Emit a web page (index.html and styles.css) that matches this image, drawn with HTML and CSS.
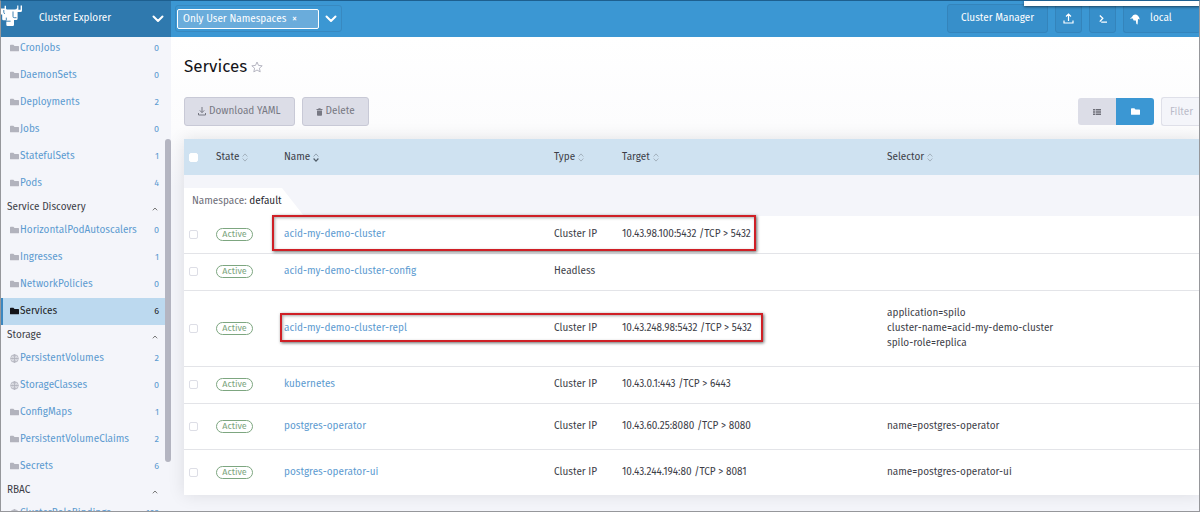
FILE: index.html
```html
<!DOCTYPE html>
<html lang="en">
<head>
<meta charset="utf-8">
<title>Services</title>
<link rel="stylesheet" href="styles.css">
</head>
<body>
<svg class="defs" aria-hidden="true">
  <symbol id="folder" viewBox="0 0 8 7"><path d="M0 .8Q0 .2.6.2H3L4 1.2H7.4Q8 1.2 8 1.8V5.4Q8 6 7.4 6H.6Q0 6 0 5.4Z" fill="currentColor"/></symbol>
  <symbol id="globe" viewBox="0 0 9 9"><g fill="none" stroke="currentColor" stroke-width=".9"><circle cx="4.5" cy="4.5" r="3.8"/><ellipse cx="4.5" cy="4.5" rx="1.7" ry="3.8"/><path d="M.7 4.5H8.3M4.5.7V8.3"/></g></symbol>
  <symbol id="chev" viewBox="0 0 12 8"><path d="M1.5 1.5 6 6 10.5 1.5" fill="none" stroke="currentColor" stroke-width="2" stroke-linecap="round" stroke-linejoin="round"/></symbol>
  <symbol id="up" viewBox="0 0 6 4"><path d="M.8 3.3 3 1 5.2 3.3" fill="none" stroke="currentColor"/></symbol>
  <symbol id="sort" viewBox="0 0 6 9"><g fill="none" stroke="currentColor" stroke-width=".9"><path d="M.6 3.5 3 .9 5.4 3.5"/><path d="M.6 5.5 3 8.1 5.4 5.5"/></g></symbol>
  <symbol id="sorted" viewBox="0 0 6 9"><g fill="none" stroke="currentColor" stroke-width=".9"><path d="M.6 3.5 3 .9 5.4 3.5" opacity=".5"/><path d="M.6 5.5 3 8.1 5.4 5.5" stroke-width="1.2"/></g></symbol>
</svg>
<header class="topbar">
  <div class="brand">
    <svg class="logo" viewBox="0 0 23 22"><path d="M0 3.5H4.6V.8H6V3.5Q6 4.6 7.2 4.6H14.5Q16.5 4.6 17.2 3V.5H18.4V4.8H20.6V.5H22V5.5Q22 7 20.5 7H17.6V13.5Q17.6 15 16.2 15H14V19.8Q14 21 12.8 21H7.6Q6.3 21 6.3 19.8V15.2H3.5Q2.2 15.2 2.2 14V9.6H0Z" fill="#fff"/><path d="M6.3 15.4V12.6M3.8 5V7.4Q3.8 8.6 5 8.6M6 16.2H10.6M13 6.5V11.5Q13 12.7 14.2 12.7H16.5" fill="none" stroke="#2f79ae" stroke-width=".9"/></svg>
    <button class="product">Cluster Explorer<svg class="chev"><use href="#chev"/></svg></button>
  </div>
  <div class="namespaces">
    <button class="chip">Only User Namespaces <span class="times">×</span></button>
    <button class="open" aria-label="Choose namespaces"><svg class="chev"><use href="#chev"/></svg></button>
  </div>
  <div class="actions">
    <button class="tool manager">Cluster Manager</button>
    <button class="tool" aria-label="Import"><svg width="11" height="11" viewBox="0 0 11 11"><path d="M5.5 8V1.2M3 3.5 5.5 1 8 3.5M1 7.5V10H10V7.5" fill="none" stroke="#fff" stroke-width="1.2"/></svg></button>
    <button class="tool" aria-label="Shell"><svg width="10" height="10" viewBox="0 0 10 10"><path d="M1.8 1.5 4.8 4.2 1.8 7.6M3.2 8.2H9" fill="none" stroke="#fff" stroke-width="1.3"/></svg></button>
    <button class="tool cluster"><svg width="10" height="12" viewBox="0 0 10 12"><path d="M.2 6Q.2 4.6 1.8 4.2Q2.8 1.6 5 1.4Q8.6 1.4 9.8 6.4L8 6 7.6 11.4 6.4 11 5.8 7.4 3.6 7.6 2.8 5.6 1.2 5.6Z" fill="#fff"/></svg>local</button>
  </div>
</header>
<div class="popup"></div>
<div class="body">
  <nav class="side">
    <ul>
      <li><a href="#"><svg><use href="#folder"/></svg>CronJobs<span>0</span></a></li>
      <li><a href="#"><svg><use href="#folder"/></svg>DaemonSets<span>0</span></a></li>
      <li><a href="#"><svg><use href="#folder"/></svg>Deployments<span>2</span></a></li>
      <li><a href="#"><svg><use href="#folder"/></svg>Jobs<span>0</span></a></li>
      <li><a href="#"><svg><use href="#folder"/></svg>StatefulSets<span>1</span></a></li>
      <li><a href="#"><svg><use href="#folder"/></svg>Pods<span>4</span></a></li>
    </ul>
    <h2>Service Discovery<svg><use href="#up"/></svg></h2>
    <ul>
      <li><a href="#"><svg><use href="#folder"/></svg>HorizontalPodAutoscalers<span>0</span></a></li>
      <li><a href="#"><svg><use href="#folder"/></svg>Ingresses<span>1</span></a></li>
      <li><a href="#"><svg><use href="#folder"/></svg>NetworkPolicies<span>0</span></a></li>
      <li><a href="#" class="current"><svg><use href="#folder"/></svg>Services<span>6</span></a></li>
    </ul>
    <h2>Storage<svg><use href="#up"/></svg></h2>
    <ul>
      <li><a href="#"><svg><use href="#globe"/></svg>PersistentVolumes<span>2</span></a></li>
      <li><a href="#"><svg><use href="#globe"/></svg>StorageClasses<span>0</span></a></li>
      <li><a href="#"><svg><use href="#folder"/></svg>ConfigMaps<span>1</span></a></li>
      <li><a href="#"><svg><use href="#folder"/></svg>PersistentVolumeClaims<span>2</span></a></li>
      <li><a href="#"><svg><use href="#folder"/></svg>Secrets<span>6</span></a></li>
    </ul>
    <h2>RBAC<svg><use href="#up"/></svg></h2>
    <ul>
      <li><a href="#"><svg><use href="#globe"/></svg>ClusterRoleBindings<span>102</span></a></li>
    </ul>
    <div class="thumb"></div>
  </nav>
  <main>
    <h1>Services <svg width="12" height="12" viewBox="0 0 12 12"><path d="M6 1 7.5 4.4 11.2 4.8 8.4 7.2 9.2 10.9 6 9 2.8 10.9 3.6 7.2.8 4.8 4.5 4.4Z" fill="none" stroke="#b6b6c2"/></svg></h1>
    <div class="bar">
      <button class="act" disabled><svg width="8" height="9" viewBox="0 0 8 9"><path d="M4 0V5.5M1.8 3.4 4 5.6 6.2 3.4M.5 6V8H7.5V6" fill="none" stroke="currentColor"/></svg>Download YAML</button>
      <button class="act" disabled><svg width="7" height="8" viewBox="0 0 7 8"><path d="M.5 1H2.2L2.6.3H4.4L4.8 1H6.5V2H.5ZM1 2.4H6V7Q6 7.8 5.2 7.8H1.8Q1 7.8 1 7Z" fill="currentColor"/></svg>Delete</button>
      <div class="views">
        <button aria-label="Flat list"><svg width="8" height="6" viewBox="0 0 8 6"><path d="M0 0H2V1.6H0ZM2.6 0H8V1.6H2.6ZM0 2.2H2V3.8H0ZM2.6 2.2H8V3.8H2.6ZM0 4.4H2V6H0ZM2.6 4.4H8V6H2.6Z" fill="#6d6e78"/></svg></button>
        <button class="on" aria-label="Group by namespace"><svg width="9" height="8"><use href="#folder"/></svg></button>
      </div>
      <input class="filter" type="text" placeholder="Filter" aria-label="Filter">
    </div>
    <table>
      <colgroup><col class="c-check"><col class="c-state"><col class="c-name"><col class="c-type"><col class="c-target"><col></colgroup>
      <thead>
        <tr><th><input type="checkbox" aria-label="Select all"></th><th>State <svg><use href="#sort"/></svg></th><th>Name <svg class="sorted"><use href="#sorted"/></svg></th><th>Type <svg><use href="#sort"/></svg></th><th>Target <svg><use href="#sort"/></svg></th><th>Selector <svg><use href="#sort"/></svg></th></tr>
      </thead>
      <tbody>
        <tr class="group"><td colspan="6"><div class="tab">Namespace: <b>default</b></div></td></tr>
        <tr><td><input type="checkbox" aria-label="Select acid-my-demo-cluster"></td><td><span class="badge">Active</span></td><td><a href="#">acid-my-demo-cluster</a></td><td>Cluster IP</td><td>10.43.98.100:5432 /TCP &gt; 5432</td><td></td></tr>
        <tr><td><input type="checkbox" aria-label="Select acid-my-demo-cluster-config"></td><td><span class="badge">Active</span></td><td><a href="#">acid-my-demo-cluster-config</a></td><td>Headless</td><td></td><td></td></tr>
        <tr class="tall"><td><input type="checkbox" aria-label="Select acid-my-demo-cluster-repl"></td><td><span class="badge">Active</span></td><td><a href="#">acid-my-demo-cluster-repl</a></td><td>Cluster IP</td><td>10.43.248.98:5432 /TCP &gt; 5432</td><td>application=spilo<br>cluster-name=acid-my-demo-cluster<br>spilo-role=replica</td></tr>
        <tr><td><input type="checkbox" aria-label="Select kubernetes"></td><td><span class="badge">Active</span></td><td><a href="#">kubernetes</a></td><td>Cluster IP</td><td>10.43.0.1:443 /TCP &gt; 6443</td><td></td></tr>
        <tr class="mid"><td><input type="checkbox" aria-label="Select postgres-operator"></td><td><span class="badge">Active</span></td><td><a href="#">postgres-operator</a></td><td>Cluster IP</td><td>10.43.60.25:8080 /TCP &gt; 8080</td><td>name=postgres-operator</td></tr>
        <tr class="mid"><td><input type="checkbox" aria-label="Select postgres-operator-ui"></td><td><span class="badge">Active</span></td><td><a href="#">postgres-operator-ui</a></td><td>Cluster IP</td><td>10.43.244.194:80 /TCP &gt; 8081</td><td>name=postgres-operator-ui</td></tr>
      </tbody>
    </table>
    <div class="mark first"></div>
    <div class="mark second"></div>
  </main>
</div>
</body>
</html>
```
FILE: styles.css
```css
* { box-sizing: border-box; }
body {
  margin: 0;
  height: 100vh;
  display: flex;
  flex-direction: column;
  overflow: hidden;
  position: relative;
  font: 10px/15px "Fira Sans", "Noto Sans", sans-serif;
  color: #3c3d47;
}
body::after {
  content: "";
  position: absolute;
  inset: 0;
  border: 1px solid #96979b;
  border-top-color: #1d5f8f;
  pointer-events: none;
}
.defs { position: absolute; width: 0; height: 0; }
button, input { font: inherit; }
button { border: 0; margin: 0; padding: 0; background: none; color: inherit; }
a { color: #5b9ad0; text-decoration: none; }

.topbar { display: flex; flex: none; height: 37px; background: #3b97d3; color: #fff; }
.brand { width: 171px; display: flex; align-items: center; background: #2f79ae; }
.logo { width: 23px; height: 22px; margin-bottom: 5px; }
.product { flex: 1; display: flex; align-items: center; justify-content: space-between; padding: 0 7px 0 16px; }
.chev { display: block; width: 12px; height: 8px; }
.namespaces { display: flex; align-items: center; margin: 5px 0 5px 4px; padding: 0 4px 0 1px; gap: 6px; border: 1px solid #3889c0; border-radius: 3px; }
.chip { width: 142px; height: 20px; padding: 0 5px; text-align: left; line-height: 16px; background: #6aacdb; border: 1px solid #fff; border-radius: 2px; }
.times { margin-left: 3px; }
.actions { margin-left: auto; display: flex; align-items: center; gap: 7px; }
.tool { height: 29px; width: 27px; display: flex; align-items: center; justify-content: center; background: #378fca; border: 1px solid #3484bb; border-radius: 3px; }
.manager { width: 101px; }
.cluster { width: 77px; justify-content: flex-start; padding-left: 6px; gap: 10px; border-right: 0; }
.popup { position: absolute; top: 0; right: 0; width: 176px; height: 6px; background: #fff; box-shadow: 0 1px 3px #0008; }

.body { flex: 1; display: flex; min-height: 0; }
.side { width: 171px; flex: none; overflow: hidden; position: relative; background: #f4f5fa; }
.side ul { list-style: none; margin: 0; padding: 0 6px 0 0; }
.side ul:first-child { margin-top: -2px; }
.side li a { display: flex; align-items: center; height: 27px; padding: 0 6px 0 10px; }
.side li svg { width: 9px; height: 9px; margin-right: 1px; color: #b2b3bd; }
.side li span { margin-left: auto; font-size: 9px; }
.side li .current { background: #bcd9ef; color: #1c1d24; box-shadow: inset 3px 0 #3b87c0; }
.side .current svg { color: #141419; }
.side h2 { display: flex; align-items: center; justify-content: space-between; height: 20px; margin: 0; padding: 0 13px 0 7px; font: inherit; }
.side h2 svg { width: 6px; height: 4px; margin-top: 3px; color: #777; }
.thumb { position: absolute; right: 0; top: 102px; width: 6px; height: 323px; border-radius: 3px; background: #b4b5c1; }

main { flex: 1; min-width: 0; position: relative; padding: 18px 0 0 13px; background: linear-gradient(#fff, #fcfcfd 90px, #f4f5fa 150px); }
h1 { display: flex; align-items: center; gap: 4px; margin: 0 0 19px; font-size: 17px; line-height: 23px; font-weight: 400; color: #141419; }
.bar { display: flex; align-items: center; gap: 7px; margin-bottom: 13px; height: 29px; }
.act { height: 29px; padding: 0 13px; display: flex; align-items: center; gap: 3px; background: #dcdde7; border: 1px solid #c8c9d6; border-radius: 3px; color: #777883; }
.views { display: flex; margin-left: auto; border-radius: 3px; overflow: hidden; }
.views button { width: 38px; height: 27px; display: flex; align-items: center; justify-content: center; background: #dcdde7; }
.views .on { background: #3b97d3; color: #fff; }
.filter { width: 39px; height: 29px; padding: 0 0 0 8px; border: 1px solid #dfe0e9; border-right: 0; border-radius: 3px 0 0 3px; background: #f4f5fa; }
.filter::placeholder { color: #babbc9; }

table { width: 100%; table-layout: fixed; border-collapse: collapse; background: #fff; box-shadow: 0 0 16px #0000001a; }
.c-check { width: 32px; }
.c-state { width: 68px; }
.c-name { width: 270px; }
.c-type { width: 68px; }
.c-target { width: 265px; }
th, td { padding: 0; text-align: left; font-weight: 400; }
thead th { height: 36px; background: #cfe2f1; }
th svg { width: 6px; height: 9px; vertical-align: -2px; color: #9fadb9; }
th .sorted { color: #4f5c68; }
tbody tr { height: 37px; border-bottom: 1px solid #e3e4e8; }
tbody .tall { height: 76px; }
tbody .mid { height: 46px; }
tbody tr:last-child { border-bottom: 0; }
tbody .group { height: 41px; background: #f4f5fa; border: 0; }
.group td { vertical-align: bottom; }
.tab { width: 120px; height: 28px; padding: 6px 8px; background: #fff; clip-path: polygon(0 0, 98px 0, 100% 100%, 0 100%); color: #6c6c76; }
.tab b { font-weight: 400; color: #26272e; }
input[type=checkbox] { appearance: none; display: block; width: 9px; height: 9px; margin: 0 0 0 5px; background: #fff; border: 1px solid #dddee6; border-radius: 2px; }
thead input[type=checkbox] { border-color: #fff; }
.badge { display: block; width: 37px; height: 13px; font-size: 9px; line-height: 11px; text-align: center; border: 1px solid #7da680; border-radius: 7px; color: #7da680; }
.mark { position: absolute; border: 2px solid #cf2026; box-shadow: 1px 1px 3px #0009, inset 1px 1px 3px #0005; }
.first { left: 101px; top: 178px; width: 484px; height: 36px; }
.second { left: 109px; top: 276px; width: 483px; height: 29px; }
```
